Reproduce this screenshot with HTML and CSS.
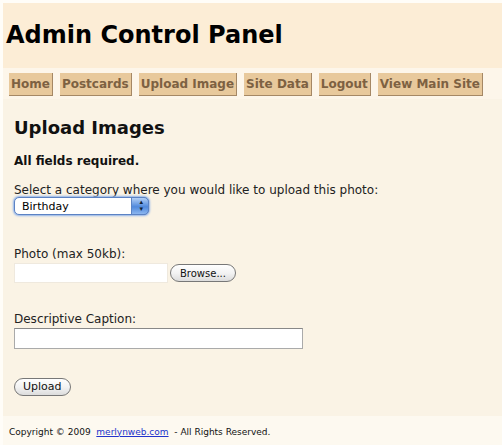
FILE: index.html
```html
<!DOCTYPE html>
<html lang="en">
<head>
    <meta charset="UTF-8">
    <title>Admin Control Panel</title>
    <link rel="stylesheet" href="styles.css">
</head>
<body>
<div id="wrap">
    <div class="header">
        <h1>Admin Control Panel</h1>
    </div>
    <ul class="nav">
        <li><a href="#">Home</a></li>
        <li><a href="#">Postcards</a></li>
        <li><a href="#">Upload Image</a></li>
        <li><a href="#">Site Data</a></li>
        <li><a href="#">Logout</a></li>
        <li><a href="#">View Main Site</a></li>
    </ul>
    <div class="content">
        <h2>Upload Images</h2>
        <p class="req">All fields required.</p>
        <form>
            <label class="lbl">Select a category where you would like to upload this photo:</label>
            <span class="sel">
                <select>
                    <option>Birthday</option>
                    <option>Holiday</option>
                    <option>Thank You</option>
                </select>
            </span>
            <div class="field">
                <label class="lbl">Photo (max 50kb):</label>
                <div class="file">
                    <span class="file-box"></span>
                    <button type="button" class="btn">Browse...</button>
                </div>
            </div>
            <div class="field field-caption">
                <label class="lbl">Descriptive Caption:</label>
                <input type="text" class="caption">
            </div>
            <div class="submit">
                <button type="button" class="btn btn-big">Upload</button>
            </div>
        </form>
    </div>
    <div class="footer">
        Copyright &copy; 2009 &nbsp;<a href="#">merlynweb.com</a> &nbsp;- All Rights Reserved.
    </div>
</div>
</body>
</html>
```
FILE: styles.css
```css
*{
    margin: 0;
    padding: 0;
}
body{
    background: #fffdf8;
    font-family: "DejaVu Sans", Verdana, sans-serif;
    color: #111;
}
li{
    list-style: none;
}
#wrap{
    margin: 3px 0 0 3px;
}
.header{
    background: #fcedd6;
    height: 65px;
    padding-left: 3px;
}
.header h1{
    font-size: 24px;
    line-height: 65px;
    color: #000;
}
.nav{
    display: flex;
    gap: 7px;
    background: #fdf6ea;
    padding: 5px 6px 3px;
    height: 23px;
}
.nav li{
    flex-shrink: 0;
}
.nav li a{
    display: block;
    height: 23px;
    line-height: 22px;
    padding: 0 2px;
    background: #e8c99c;
    border-right: 1px solid #a58865;
    border-bottom: 1px solid #a58865;
    box-sizing: border-box;
    color: #7d6142;
    font-size: 12px;
    font-weight: bold;
    text-decoration: none;
    white-space: nowrap;
}
.content{
    background: #faf3e5;
    padding: 18px 11px 20px;
}
.content h2{
    font-size: 18px;
    line-height: 22px;
}
.req{
    font-size: 12px;
    line-height: 14px;
    font-weight: bold;
    margin-top: 15px;
}
.lbl{
    display: block;
    font-size: 12px;
    line-height: 14px;
    color: #222;
}
form{
    margin-top: 15px;
}
.sel{
    display: inline-block;
    position: relative;
    vertical-align: top;
}
.sel select{
    display: block;
    appearance: none;
    -webkit-appearance: none;
    width: 135px;
    height: 18px;
    border: 1px solid #5c83c4;
    border-radius: 5px;
    box-shadow: 0 0 2px 1px #8fb2ea;
    background: #fff;
    font-family: "DejaVu Sans", sans-serif;
    font-size: 11px;
    padding-left: 7px;
    color: #000;
}
.sel::after{
    content: "";
    position: absolute;
    right: 0;
    top: 0;
    width: 18px;
    height: 18px;
    border-radius: 0 5px 5px 0;
    background: linear-gradient(#b3cff5, #5089dc 55%, #8cb6ef);
    border: 1px solid #5c83c4;
    box-sizing: border-box;
}
.sel::before{
    content: "\25B4\A\25BE";
    white-space: pre;
    position: absolute;
    right: 6px;
    top: 2px;
    z-index: 1;
    font-size: 7px;
    line-height: 7px;
    color: #123;
}
.field{
    margin-top: 31px;
}
.field-caption{
    margin-top: 29px;
}
.file{
    display: flex;
    align-items: center;
    gap: 2px;
    margin-top: 2px;
}
.file-box{
    width: 154px;
    height: 20px;
    box-sizing: border-box;
    background: #fff;
    border: 1px solid #efe9de;
}
.btn{
    font-family: "DejaVu Sans", sans-serif;
    font-size: 10px;
    height: 18px;
    padding: 0 9px;
    border: 1px solid #777;
    border-radius: 9px;
    background: linear-gradient(#fff, #f3f3f3 50%, #dcdcdc);
    color: #111;
}
.caption{
    display: block;
    margin-top: 2px;
    width: 289px;
    height: 21px;
    box-sizing: border-box;
    border: 1px solid #aaa;
    border-top-color: #888;
    background: #fff;
}
.submit{
    margin-top: 26px;
}
.btn-big{
    font-size: 11px;
    height: 18px;
    padding: 0 8px;
}
.footer{
    background: #fdf9f0;
    height: 30px;
    padding-left: 6px;
    font-size: 9px;
    line-height: 32px;
    color: #111;
}
.footer a{
    color: #2233cc;
}
```
